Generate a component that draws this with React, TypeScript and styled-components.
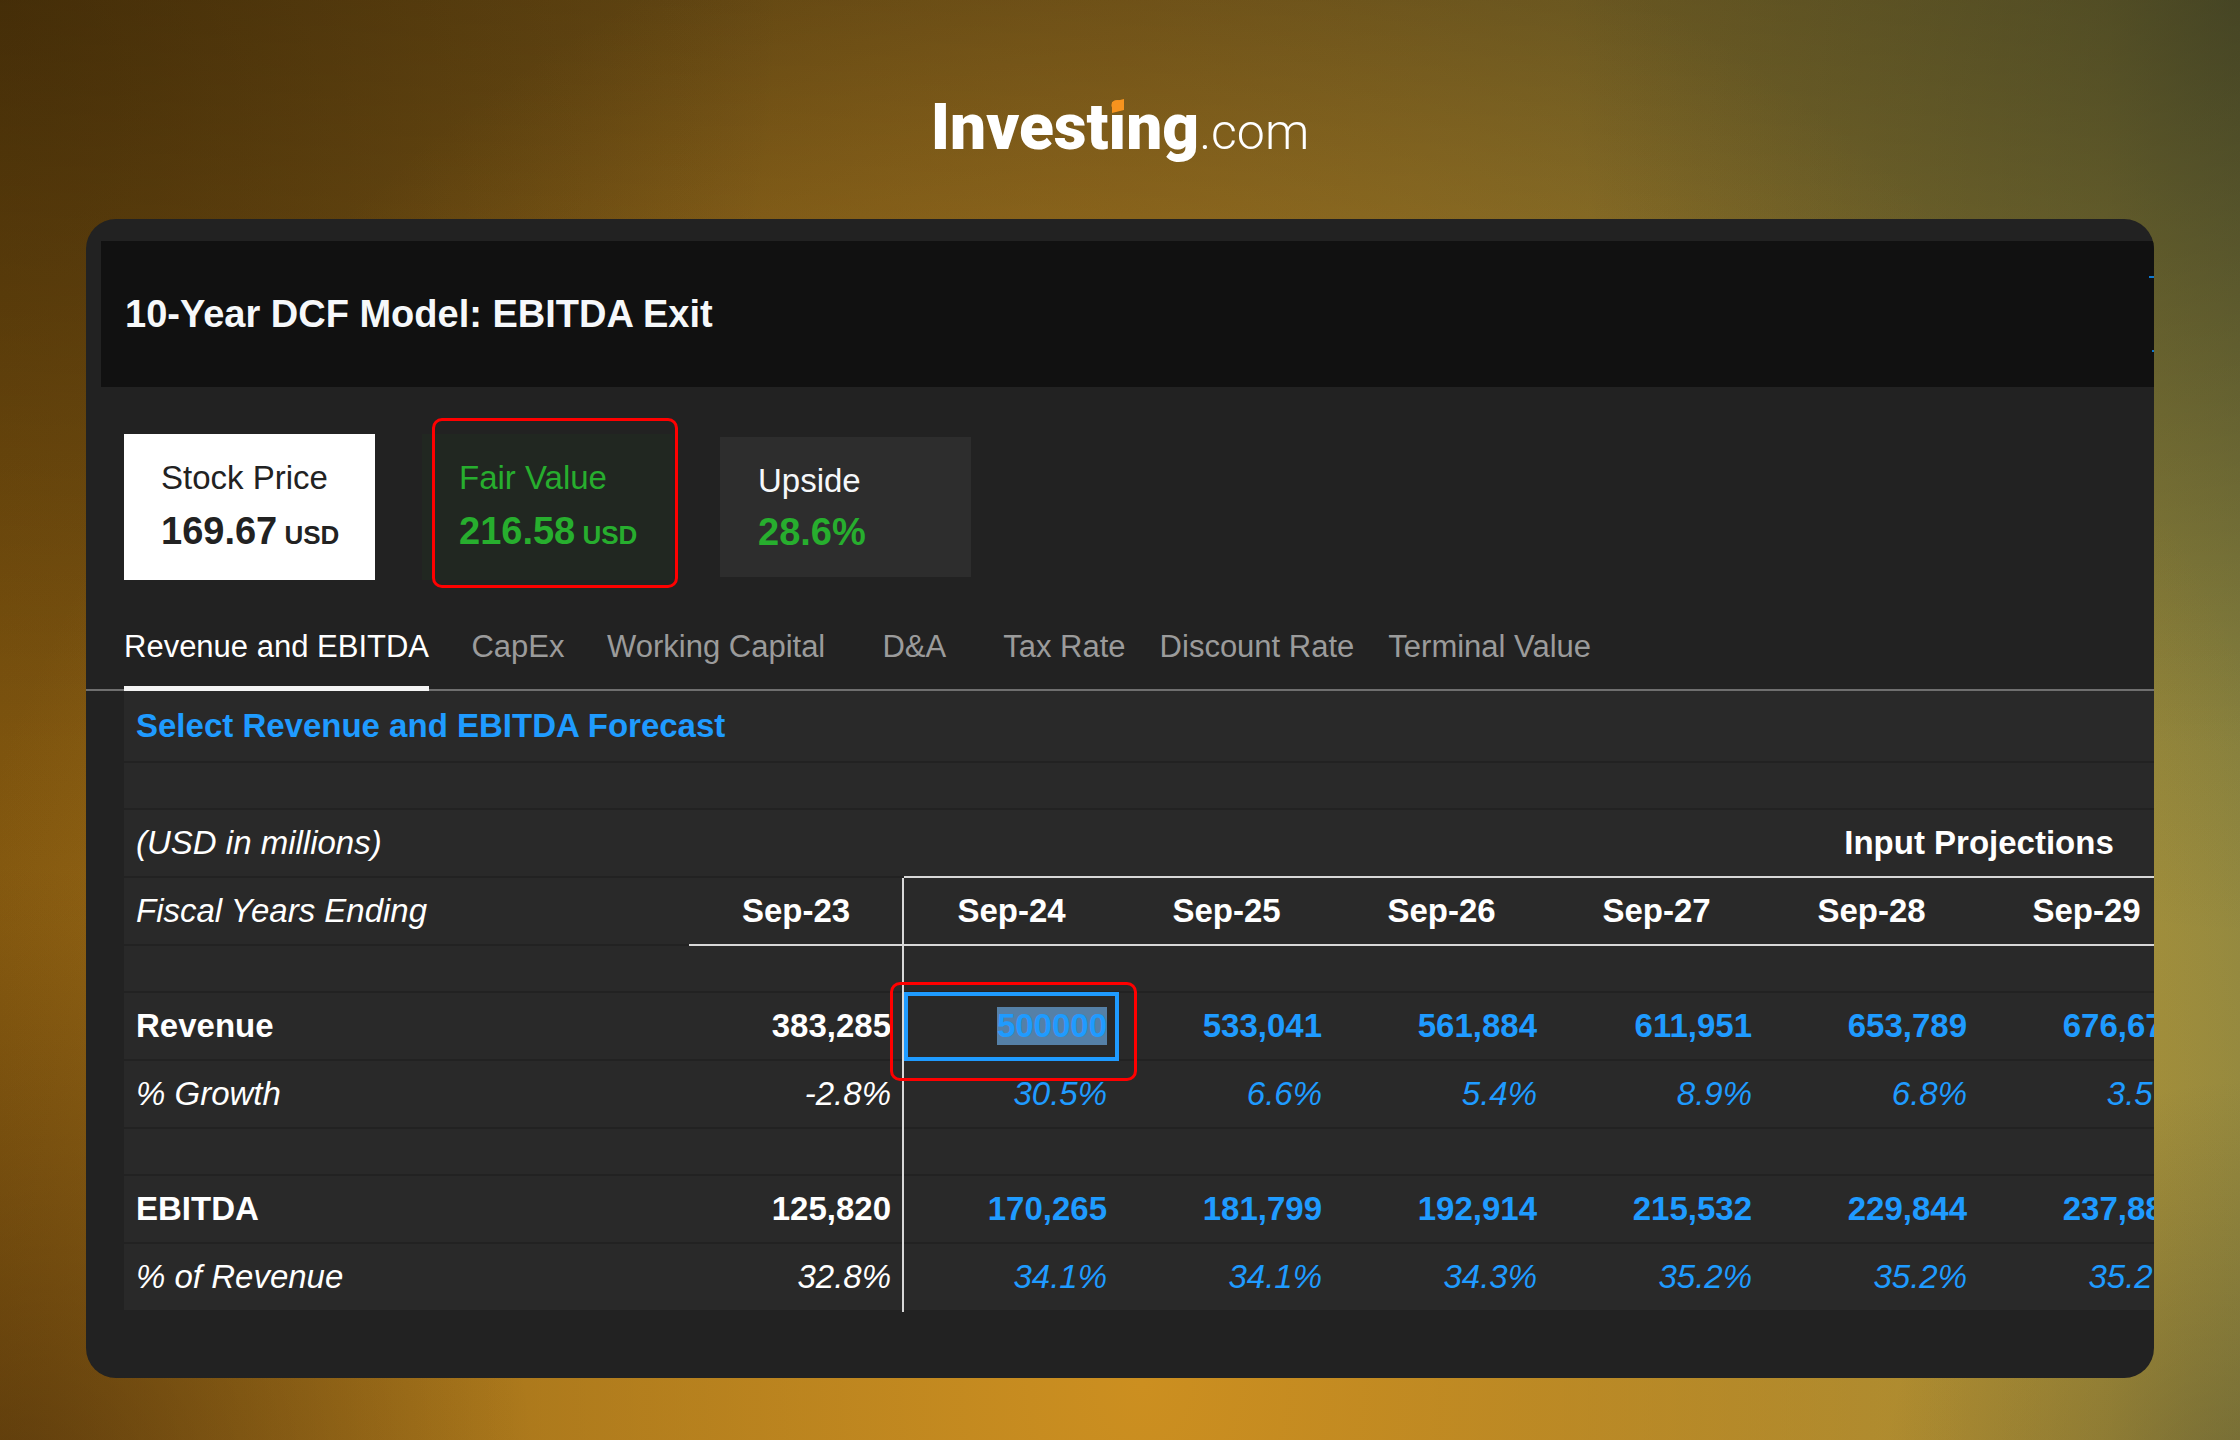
import React, { useEffect, useRef, useState } from "react";
import styled, { createGlobalStyle, css } from "styled-components";

const sans = '"Liberation Sans", Arial, Helvetica, sans-serif';

const color = {
  panel: "#222222",
  header: "#111111",
  row: "#292929",
  blue: "#1f9bff",
  green: "#27ae2e",
  red: "#ff0000",
  rule: "#d8d8d8",
};

const GlobalStyle = createGlobalStyle`
  *, *::before, *::after { box-sizing: border-box; }
  body { margin: 0; font-family: ${sans}; color: #fff; overflow-x: hidden; }
`;

const Page = styled.div`
  min-height: 100vh;
  padding: 0 86px 62px;
  background:
    radial-gradient(ellipse 35% 65% at 0% 0%, rgba(28, 18, 4, 0.35), rgba(28, 18, 4, 0) 100%),
    radial-gradient(ellipse 30% 65% at 100% 0%, rgba(24, 30, 22, 0.38), rgba(24, 30, 22, 0) 100%),
    radial-gradient(ellipse 24% 45% at 0% 105%, rgba(48, 26, 8, 0.5), rgba(48, 26, 8, 0) 100%),
    radial-gradient(ellipse 16% 30% at 100% 105%, rgba(60, 60, 40, 0.4), rgba(60, 60, 40, 0) 100%),
    radial-gradient(ellipse 56% 105% at 51% 96%, rgba(204, 143, 32, 1) 0%, rgba(200, 144, 36, 0) 100%),
    linear-gradient(180deg, rgba(0, 0, 0, 0.32) 0%, rgba(0, 0, 0, 0) 52%),
    linear-gradient(90deg, #85590f 0%, #966f22 50%, #9e903f 94%, #908942 100%);
`;

const Brand = styled.header`
  height: 219px;
  display: flex;
  justify-content: center;
  align-items: flex-end;
  padding-bottom: 51px;
`;

const Logo = styled.a`
  display: flex;
  align-items: baseline;
  color: #fff;
  text-decoration: none;
  line-height: 72px;
`;

const LogoName = styled.span`
  font: 900 64px/72px Roboto, ${sans};
`;

const LogoStem = styled.span`
  position: relative;
  color: transparent;
  background: linear-gradient(#f7931e 0 20px, #fff 20px);
  background-clip: text;
  -webkit-background-clip: text;
`;

const LogoFlag = styled.svg`
  position: absolute;
  left: 2px;
  top: 9px;
  width: 14px;
  height: 14px;
`;

const LogoSuffix = styled.span`
  font: 300 50px/72px Roboto, ${sans};
`;

const Panel = styled.main`
  overflow: hidden;
  border-radius: 30px;
  background: ${color.panel};
  padding: 22px 0 66px;
`;

const TitleBar = styled.div`
  display: flex;
  align-items: center;
  justify-content: space-between;
  height: 146px;
  margin-left: 15px;
  padding-left: 24px;
  background: ${color.header};
`;

const Title = styled.h1`
  margin: 0;
  font-size: 38px;
  font-weight: 700;
  color: #f6f8fa;
`;

const EdgeMarks = styled.svg`
  width: 6px;
  height: 78px;
`;

const Cards = styled.section`
  display: flex;
  align-items: center;
  gap: 47px;
  padding: 47px 38px 0;
`;

type Tone = "light" | "green" | "plain";

const Card = styled.div<{ $tone: Tone }>`
  position: relative;
  display: flex;
  flex-direction: column;
  min-width: 251px;
  ${(p) =>
    p.$tone === "plain"
      ? css`
          gap: 7px;
          padding: 22px 34px 23px 38px;
        `
      : css`
          gap: 9px;
          padding: 22px 34px 27px 37px;
        `}
  background: ${(p) => ({ light: "#ffffff", green: "#212721", plain: "#2d2d2d" })[p.$tone]};
  color: ${(p) => ({ light: "#222222", green: color.green, plain: "#f6f8fa" })[p.$tone]};
`;

const CardLabel = styled.span`
  font-size: 33px;
  line-height: 44px;
`;

const CardValue = styled.strong<{ $green?: boolean }>`
  font-size: 38px;
  line-height: 44px;
  white-space: nowrap;
  ${(p) => p.$green && `color: ${color.green};`}
`;

const Unit = styled.span`
  font-size: 26px;
  line-height: 1;
`;

const Highlight = styled.span`
  position: absolute;
  pointer-events: none;
  border: 3px solid ${color.red};
  border-radius: 10px;
`;

const CardHighlight = styled(Highlight)`
  inset: -16px -5px -8px 10px;
`;

const CellHighlight = styled(Highlight)`
  inset: -11px -18px -20px -14px;
  z-index: 1;
`;

const Tabs = styled.nav`
  display: flex;
  margin-top: 49px;
  padding-left: 21px;
  box-shadow: inset 0 -2px #6f6f6f;
`;

const Tab = styled.button<{ $active: boolean }>`
  min-width: 144px;
  padding: 0 17px;
  border: 0;
  background: none;
  font: 31px/36px ${sans};
  color: ${(p) => (p.$active ? "#ffffff" : "#9b9b9b")};
  white-space: nowrap;
`;

const TabText = styled.span<{ $active: boolean }>`
  display: block;
  padding-bottom: 21px;
  border-bottom: 5px solid ${(p) => (p.$active ? "#f4f4f4" : "transparent")};
`;

const Sheet = styled.div`
  margin-left: 38px;
  overflow: hidden;
`;

const Table = styled.table`
  table-layout: fixed;
  width: 2930px;
  border-collapse: separate;
  border-spacing: 0;
  font-size: 33px;
  line-height: 38px;
  background: ${color.row};
`;

const LabelCol = styled.col`
  width: 565px;
`;

const YearCol = styled.col`
  width: 215px;
`;

const Row = styled.tr<{ $size?: "tall" | "spacer" }>`
  height: ${(p) => (p.$size === "tall" ? 72 : p.$size === "spacer" ? 47 : 68)}px;
`;

interface CellProps {
  $bold?: boolean;
  $italic?: boolean;
  $rule?: boolean;
  $divider?: boolean;
}

const cell = css<CellProps>`
  padding: 0 ${(p) => (p.$divider ? 13 : 12)}px 2px 12px;
  box-shadow:
    ${(p) => (p.$divider ? `inset -2px 0 ${color.rule},` : "")} inset 0 -2px ${(p) => (p.$rule ? color.rule : color.panel)};
  font-weight: ${(p) => (p.$bold ? 700 : 400)};
  font-style: ${(p) => (p.$italic ? "italic" : "normal")};
  white-space: nowrap;
`;

const LabelCell = styled.th<CellProps>`
  ${cell}
  text-align: left;
`;

const HeadCell = styled.th<CellProps>`
  ${cell}
  text-align: center;
`;

const DataCell = styled.td<CellProps & { $input?: boolean }>`
  ${cell}
  text-align: right;
  ${(p) => p.$input && `color: ${color.blue};`}
`;

const EditCell = styled.td`
  position: relative;
  padding: 0;
`;

const EditInput = styled.input`
  display: block;
  width: 100%;
  height: 69px;
  margin: -1px 0 0;
  padding: 0 8px 2px;
  border: 4px solid ${color.blue};
  border-radius: 0;
  outline: none;
  background: ${color.row};
  color: ${color.blue};
  caret-color: transparent;
  font: 700 33px/43px ${sans};
  text-align: right;
  &::selection {
    background: #5580a7;
    color: ${color.blue};
  }
`;

const ForecastLink = styled.a`
  color: ${color.blue};
  text-decoration: none;
`;

const tabNames = [
  "Revenue and EBITDA",
  "CapEx",
  "Working Capital",
  "D&A",
  "Tax Rate",
  "Discount Rate",
  "Terminal Value",
];

const years = ["Sep-24", "Sep-25", "Sep-26", "Sep-27", "Sep-28", "Sep-29"];

interface Line {
  label: string;
  actual: string;
  values: string[];
  percent?: boolean;
  editable?: boolean;
}

const blocks: Line[][] = [
  [
    {
      label: "Revenue",
      actual: "383,285",
      values: ["500000", "533,041", "561,884", "611,951", "653,789", "676,676"],
      editable: true,
    },
    {
      label: "% Growth",
      actual: "-2.8%",
      values: ["30.5%", "6.6%", "5.4%", "8.9%", "6.8%", "3.5%"],
      percent: true,
    },
  ],
  [
    {
      label: "EBITDA",
      actual: "125,820",
      values: ["170,265", "181,799", "192,914", "215,532", "229,844", "237,888"],
    },
    {
      label: "% of Revenue",
      actual: "32.8%",
      values: ["34.1%", "34.1%", "34.3%", "35.2%", "35.2%", "35.2%"],
      percent: true,
    },
  ],
];

function EditableCell({ initial, label }: { initial: string; label: string }) {
  const ref = useRef<HTMLInputElement>(null);
  const [value, setValue] = useState(initial);
  useEffect(() => {
    ref.current?.focus({ preventScroll: true });
    ref.current?.select();
  }, []);
  return (
    <EditCell>
      <EditInput ref={ref} aria-label={label} value={value} onChange={(e) => setValue(e.target.value)} />
      <CellHighlight />
    </EditCell>
  );
}

function SpacerRow() {
  return (
    <Row $size="spacer">
      <DataCell />
      <DataCell $divider />
      <DataCell colSpan={7} />
    </Row>
  );
}

function LineRow({ line }: { line: Line }) {
  const bold = !line.percent;
  return (
    <Row>
      <LabelCell scope="row" $bold={bold} $italic={line.percent}>
        {line.label}
      </LabelCell>
      <DataCell $bold={bold} $italic={line.percent} $divider>
        {line.actual}
      </DataCell>
      {line.values.map((v, i) =>
        line.editable && i === 0 ? (
          <EditableCell key={i} initial={v} label={`${line.label} ${years[i]}`} />
        ) : (
          <DataCell key={i} $bold={bold} $italic={line.percent} $input>
            {v}
          </DataCell>
        ),
      )}
      <DataCell />
    </Row>
  );
}

export default function App() {
  const [active, setActive] = useState(0);
  return (
    <>
      <GlobalStyle />
      <Page>
        <Brand>
          <Logo href="#home">
            <LogoName>
              Invest
              <LogoStem>
                i
                <LogoFlag viewBox="0 0 14 14" aria-hidden="true">
                  <polygon points="1,3 13,0 13,11 1,14" fill="#f7931e" />
                </LogoFlag>
              </LogoStem>
              ng
            </LogoName>
            <LogoSuffix>.com</LogoSuffix>
          </Logo>
        </Brand>
        <Panel>
          <TitleBar>
            <Title>10-Year DCF Model: EBITDA Exit</Title>
            <EdgeMarks viewBox="0 0 6 78" aria-hidden="true">
              <path d="M1 2H6M4 76H6" stroke="#0d78cf" strokeWidth="2" />
            </EdgeMarks>
          </TitleBar>
          <Cards>
            <Card $tone="light">
              <CardLabel>Stock Price</CardLabel>
              <CardValue>
                169.67<Unit> USD</Unit>
              </CardValue>
            </Card>
            <Card $tone="green">
              <CardLabel>Fair Value</CardLabel>
              <CardValue>
                216.58<Unit> USD</Unit>
              </CardValue>
              <CardHighlight />
            </Card>
            <Card $tone="plain">
              <CardLabel>Upside</CardLabel>
              <CardValue $green>28.6%</CardValue>
            </Card>
          </Cards>
          <Tabs role="tablist">
            {tabNames.map((name, i) => (
              <Tab
                key={name}
                role="tab"
                type="button"
                aria-selected={i === active}
                $active={i === active}
                onClick={() => setActive(i)}
              >
                <TabText $active={i === active}>{name}</TabText>
              </Tab>
            ))}
          </Tabs>
          <Sheet>
            <Table>
              <colgroup>
                <LabelCol />
                <YearCol />
                {years.map((y) => (
                  <YearCol key={y} />
                ))}
                <col />
              </colgroup>
              <thead>
                <Row $size="tall">
                  <LabelCell colSpan={9} $bold>
                    <ForecastLink href="#forecast">Select Revenue and EBITDA Forecast</ForecastLink>
                  </LabelCell>
                </Row>
                <Row $size="spacer">
                  <DataCell colSpan={9} />
                </Row>
                <Row>
                  <LabelCell $italic>(USD in millions)</LabelCell>
                  <DataCell />
                  <HeadCell colSpan={7} $bold $rule>
                    Input Projections
                  </HeadCell>
                </Row>
                <Row>
                  <LabelCell $italic>Fiscal Years Ending</LabelCell>
                  <HeadCell scope="col" $bold $rule $divider>
                    Sep-23
                  </HeadCell>
                  {years.map((y) => (
                    <HeadCell key={y} scope="col" $bold $rule>
                      {y}
                    </HeadCell>
                  ))}
                  <HeadCell as="td" $rule />
                </Row>
              </thead>
              <tbody>
                {blocks.map((lines) => (
                  <React.Fragment key={lines[0].label}>
                    <SpacerRow />
                    {lines.map((line) => (
                      <LineRow key={line.label} line={line} />
                    ))}
                  </React.Fragment>
                ))}
              </tbody>
            </Table>
          </Sheet>
        </Panel>
      </Page>
    </>
  );
}
